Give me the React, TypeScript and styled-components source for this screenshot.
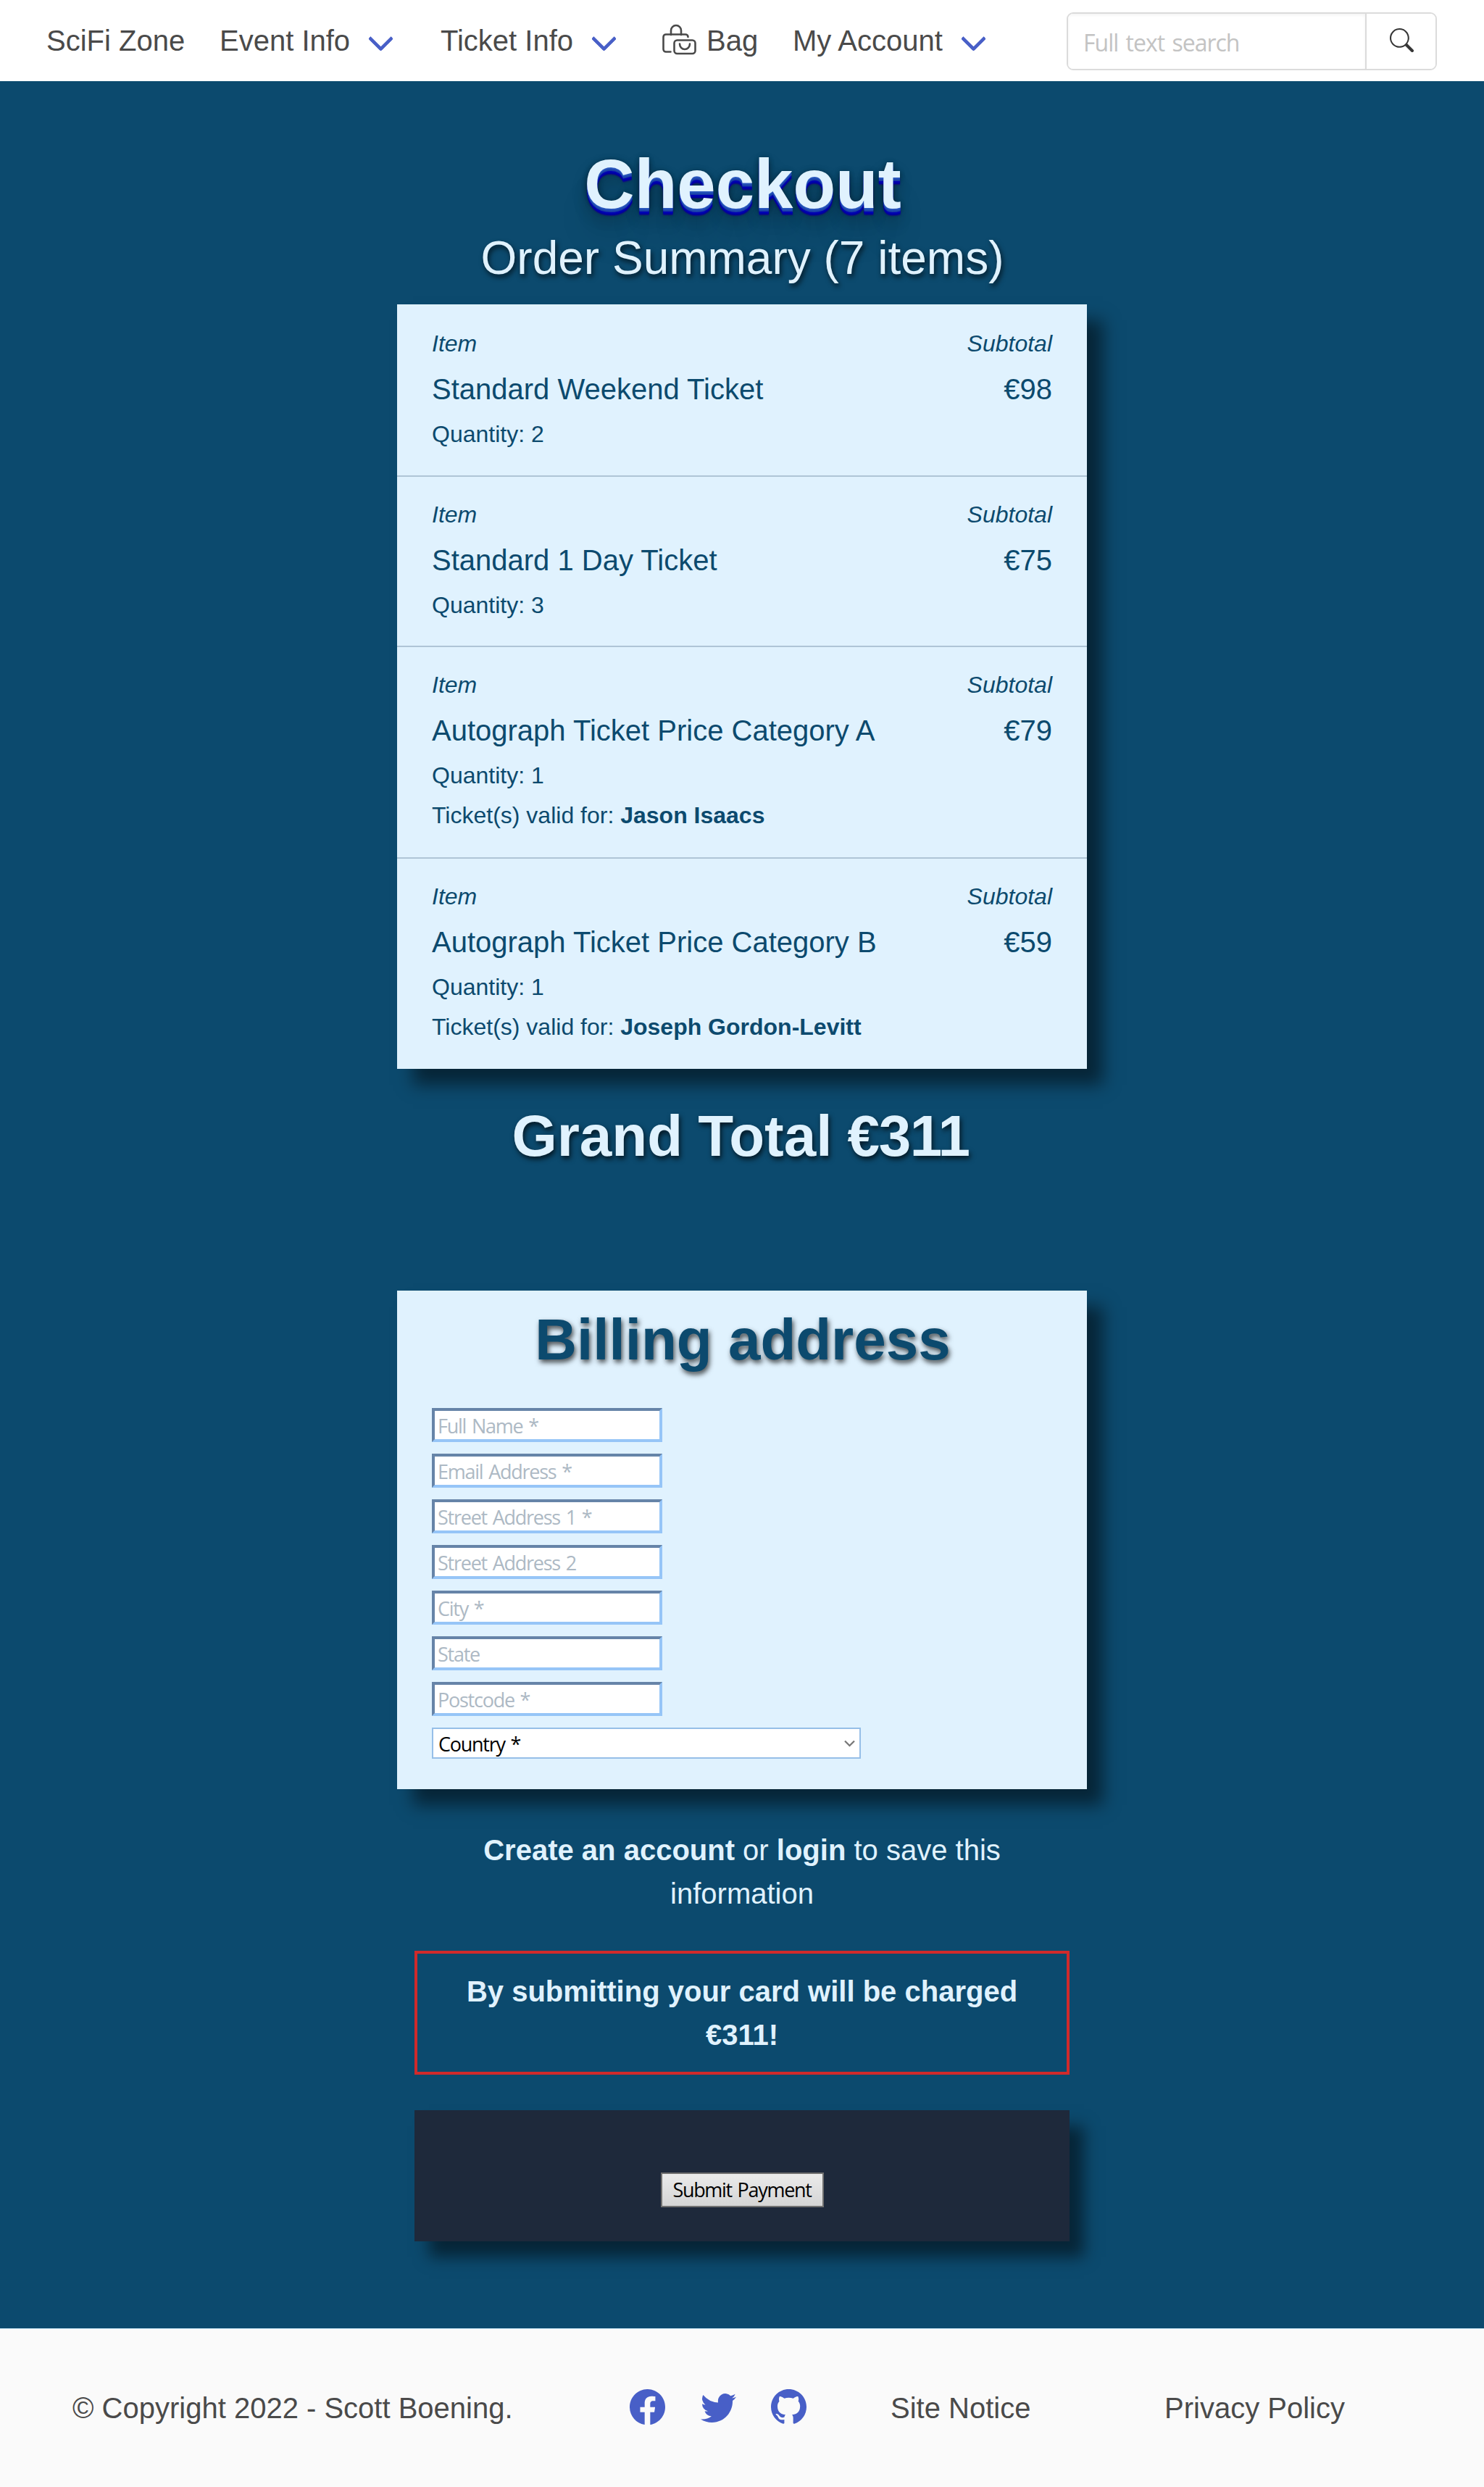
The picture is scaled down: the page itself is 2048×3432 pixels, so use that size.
import React from "react";
import styled, { createGlobalStyle } from "styled-components";
import { BsFacebook, BsTwitter, BsGithub, BsSearch } from "react-icons/bs";

const navy = "#0c4a6e";
const ice = "#e0f2fe";
const sans = `"Liberation Sans", Arial, sans-serif`;
const ui = `"Open Sans", "Noto Sans", sans-serif`;

const GlobalStyle = createGlobalStyle`
  *, *::before, *::after { box-sizing: border-box; }
  body { margin: 0; background: ${navy}; font-family: ${sans}; color: #4a4a4a; }
  h1, h2, p, ul { margin: 0; padding: 0; }
`;

const Page = styled.div`
  width: 2048px;
  min-height: 3432px;
  display: flex;
  flex-direction: column;
  background: ${navy};
  overflow: hidden;
`;

const Navbar = styled.nav`
  height: 112px;
  padding: 0 65px 0 64px;
  display: flex;
  align-items: center;
  background: #fff;
`;

const NavItem = styled.a<{ $width: number }>`
  width: ${(p) => p.$width}px;
  display: flex;
  align-items: center;
  flex: none;
  font-size: 40px;
  line-height: 60px;
  white-space: nowrap;
`;

const Chevron = styled.span`
  width: 25px;
  height: 25px;
  margin: -5px 0 0 30px;
  border: solid #485fc7;
  border-width: 0 0 5px 5px;
  border-radius: 3px;
  transform: rotate(-45deg);
`;

const BagIcon = styled.svg`
  width: 48px;
  height: 44px;
  margin: -2px 14px 0 0;
  flex: none;
`;

const Search = styled.form`
  width: 511px;
  height: 80px;
  margin: 1px 0 0 auto;
  display: flex;
  border: 2px solid #dbdbdb;
  border-radius: 9px;
  overflow: hidden;
`;

const SearchInput = styled.input`
  flex: 1;
  min-width: 0;
  padding: 4px 21px 0;
  border: 0;
  background: #fff;
  box-shadow: inset 0 2px 4px rgba(10, 10, 10, 0.05);
  font-family: ${ui};
  font-size: 32px;
  letter-spacing: -1px;
  word-spacing: 3px;
  &::placeholder { color: #c3c3c3; opacity: 1; }
`;

const SearchButton = styled.button`
  width: 97px;
  padding: 0 0 3px 1px;
  display: flex;
  align-items: center;
  justify-content: center;
  border: 0;
  border-left: 2px solid #dbdbdb;
  background: #fff;
  color: #363636;
`;

const Main = styled.main`
  flex: 1;
  display: flex;
  flex-direction: column;
  align-items: center;
  color: ${ice};
`;

const Title = styled.h1`
  margin-top: 88px;
  padding-left: 2px;
  font-size: 96px;
  line-height: 108px;
  text-shadow: 0 2px 0 #2856bd, 0 4px 0 #1d47ae, 0 5px 0 #1838a4,
    0 7px 0 #0000b4, 0 9px 0 #0000a0, 0 10px 2px rgba(20, 0, 130, 0.8),
    0 0 10px rgba(0, 0, 0, 0.1), 0 2px 6px rgba(0, 0, 0, 0.3),
    0 6px 10px rgba(0, 0, 0, 0.15), 0 11px 22px rgba(0, 0, 0, 0.2),
    0 22px 22px rgba(0, 0, 0, 0.1), 0 44px 44px rgba(0, 0, 0, 0.1);
`;

const Summary = styled.p`
  height: 112px;
  padding-left: 1px;
  font-size: 64px;
  line-height: 96px;
  text-shadow: 2px 4px 7px rgba(0, 0, 0, 0.7);
`;

const Card = styled.section`
  width: 952px;
  background: ${ice};
  color: ${navy};
  box-shadow: 22px 22px 22px rgba(0, 0, 0, 0.5);
`;

const OrderItem = styled.article<{ $tall?: boolean }>`
  height: ${(p) => (p.$tall ? 292 : 235.5)}px;
  padding: 24px 48px 0;
  border-top: 2px solid #afc5d6;
  &:first-child { border-top-color: ${ice}; }
`;

const Line = styled.div<{ $size: number; $height: number; $italic?: boolean }>`
  display: flex;
  justify-content: space-between;
  font-size: ${(p) => p.$size}px;
  line-height: ${(p) => p.$height}px;
  font-style: ${(p) => (p.$italic ? "italic" : "normal")};
`;

const Heading = styled.h2`
  font-size: 80px;
  line-height: 90px;
  text-align: center;
  text-shadow: 2px 4px 7px rgba(0, 0, 0, 0.7);
`;

const GrandTotal = styled(Heading)`
  height: 306px;
  padding: 48px 4px 0 0;
  word-spacing: -1px;
`;

const TotalPrice = styled.span`
  letter-spacing: -1.4px;
`;

const BillingTitle = styled(Heading)`
  height: 139px;
  padding-left: 2px;
`;

const Billing = styled(Card)`
  height: 688px;
  padding: 23px 48px 0;
`;

const Fields = styled.div`
  display: flex;
  flex-direction: column;
  align-items: flex-start;
  gap: 16px;
`;

const Field = styled.input`
  width: 318px;
  height: 47px;
  padding: 2px 4px 0;
  border: 4px solid;
  border-color: #6684a8 #96c5f7 #96c5f7 #6684a8;
  border-radius: 0;
  background: #fff;
  font-family: ${ui};
  font-size: 27px;
  letter-spacing: -1.25px;
  word-spacing: 2px;
  &::placeholder { color: #adb9c4; opacity: 1; }
`;

const CountrySelect = styled.div`
  width: 592px;
  height: 43px;
  padding: 1px 6px 0 7px;
  display: flex;
  align-items: center;
  justify-content: space-between;
  border: 2px solid #96bfe8;
  background: #fff;
  color: #000;
  font-family: ${ui};
  font-size: 27px;
  letter-spacing: -1.25px;
  word-spacing: 2px;
`;

const Note = styled.p`
  width: 760px;
  margin-top: 54px;
  font-size: 40px;
  line-height: 60.4px;
  text-align: center;
`;

const Warning = styled.p`
  width: 904px;
  height: 171px;
  margin-top: 48px;
  padding: 22px 40px 0;
  border: 4px solid #d12a2b;
  font-size: 40px;
  font-weight: 700;
  line-height: 60.2px;
  text-align: center;
`;

const Payment = styled.section`
  width: 904px;
  height: 181px;
  margin-top: 49px;
  padding-top: 86px;
  display: flex;
  justify-content: center;
  align-items: flex-start;
  background: #1e293b;
  box-shadow: 20px 22px 20px rgba(0, 0, 0, 0.5);
`;

const SubmitButton = styled.button`
  width: 225px;
  height: 48px;
  padding: 0;
  border: 2px solid #707070;
  background: linear-gradient(#ebebeb, #d5d5d5);
  color: #000;
  font-family: ${ui};
  font-size: 27px;
  letter-spacing: -1.3px;
  word-spacing: 2px;
  white-space: nowrap;
`;

const Footer = styled.footer`
  height: 219px;
  padding-left: 100px;
  display: flex;
  align-items: center;
  border-top: 1px solid #c9e7f5;
  background: #fafafa;
  font-size: 40px;
  line-height: 60px;
  white-space: nowrap;
`;

const FooterCell = styled.span<{ $width: number }>`
  width: ${(p) => p.$width}px;
  flex: none;
`;

const Social = styled.div`
  width: 360px;
  display: flex;
  gap: 48.5px;
  flex: none;
  margin-top: -3px;
  color: #485fc7;
`;

type Item = { title: string; price: string; qty: number; guest?: string };

const items: Item[] = [
  { title: "Standard Weekend Ticket", price: "€98", qty: 2 },
  { title: "Standard 1 Day Ticket", price: "€75", qty: 3 },
  { title: "Autograph Ticket Price Category A", price: "€79", qty: 1, guest: "Jason Isaacs" },
  { title: "Autograph Ticket Price Category B", price: "€59", qty: 1, guest: "Joseph Gordon-Levitt" },
];

const fields = [
  "Full Name *",
  "Email Address *",
  "Street Address 1 *",
  "Street Address 2",
  "City *",
  "State",
  "Postcode *",
];

export default function App() {
  return (
    <Page>
      <GlobalStyle />
      <Navbar>
        <NavItem $width={239}>SciFi Zone</NavItem>
        <NavItem $width={305}>Event Info<Chevron /></NavItem>
        <NavItem $width={305}>Ticket Info<Chevron /></NavItem>
        <NavItem $width={181}>
          <BagIcon viewBox="0 0 48 44" fill="none" stroke="#4a4a4a" strokeWidth="2.600" strokeLinecap="round">
            <path d="M13 15V9a7 7 0 0 1 14 0v6" />
            <path d="M12.500 38.500H6a3.500 3.500 0 0 1-3.500-3.500V18a3.500 3.500 0 0 1 3.500-3.500H33a3.500 3.500 0 0 1 3.500 3.500" />
            <rect x="17.500" y="22.500" width="29" height="18.500" rx="4" />
            <path d="M25 27.500a7 7.500 0 0 0 14 0" />
          </BagIcon>
          Bag
        </NavItem>
        <NavItem $width={280}>My Account<Chevron /></NavItem>
        <Search>
          <SearchInput placeholder="Full text search" />
          <SearchButton type="button"><BsSearch size={33} /></SearchButton>
        </Search>
      </Navbar>
      <Main>
        <Title>Checkout</Title>
        <Summary>Order Summary (7 items)</Summary>
        <Card>
          {items.map((item) => (
            <OrderItem key={item.title} $tall={!!item.guest}>
              <Line $size={32} $height={56} $italic><span>Item</span><span>Subtotal</span></Line>
              <Line $size={40} $height={71}><span>{item.title}</span><span>{item.price}</span></Line>
              <Line $size={32} $height={53}>Quantity: {item.qty}</Line>
              {item.guest && (
                <Line $size={32} $height={57}>
                  <span>Ticket(s) valid for: <b>{item.guest}</b></span>
                </Line>
              )}
            </OrderItem>
          ))}
        </Card>
        <GrandTotal>Grand Total <TotalPrice>€311</TotalPrice></GrandTotal>
        <Billing>
          <BillingTitle>Billing address</BillingTitle>
          <Fields>
            {fields.map((f) => <Field key={f} placeholder={f} />)}
            <CountrySelect>
              <span>Country *</span>
              <svg width="15" height="10" viewBox="0 0 15 10" fill="none" stroke="#767676" strokeWidth="2.200">
                <path d="M1 1.500l6.500 6.500L14 1.500" />
              </svg>
            </CountrySelect>
          </Fields>
        </Billing>
        <Note><b>Create an account</b> or <b>login</b> to save this information</Note>
        <Warning>By submitting your card will be charged €311!</Warning>
        <Payment><SubmitButton>Submit Payment</SubmitButton></Payment>
      </Main>
      <Footer>
        <FooterCell $width={769}>© Copyright 2022 - Scott Boening.</FooterCell>
        <Social>
          <BsFacebook size={49} />
          <BsTwitter size={49} />
          <BsGithub size={49} />
        </Social>
        <FooterCell $width={378}>Site Notice</FooterCell>
        <FooterCell $width={260}>Privacy Policy</FooterCell>
      </Footer>
    </Page>
  );
}
